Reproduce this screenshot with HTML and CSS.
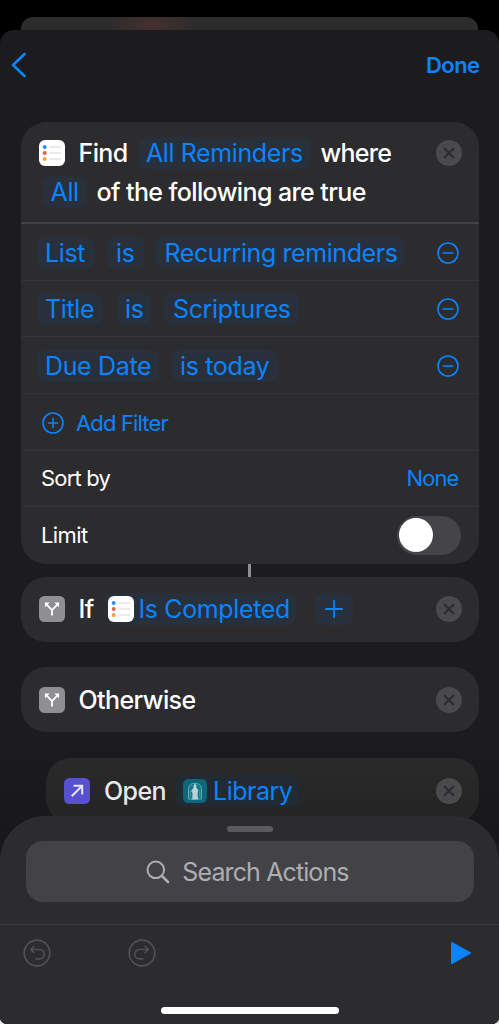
FILE: index.html
```html
<!DOCTYPE html>
<html lang="en">
<head>
<meta charset="utf-8">
<title>Shortcut Editor</title>
<link rel="stylesheet" href="styles.css">
</head>
<body>
<svg class="defs" width="0" height="0" aria-hidden="true">
  <symbol id="close" viewBox="0 0 26 26"><circle cx="13" cy="13" r="13" fill="#4a4a4c"/><path d="M8.700 8.700l8.600 8.600M17.300 8.700l-8.600 8.600" stroke="#2c2c2e" stroke-width="2.100" stroke-linecap="round"/></symbol>
  <symbol id="minus" viewBox="0 0 24 24"><circle cx="12" cy="12" r="10" fill="none" stroke="#0a84ff" stroke-width="1.600"/><path d="M7.300 12h9.400" stroke="#0a84ff" stroke-width="1.600" stroke-linecap="round"/></symbol>
  <symbol id="reminders" viewBox="0 0 26 26"><rect width="26" height="26" rx="6" fill="#fff"/><path d="M10.500 7h11.500M10.500 13h11.500M10.500 19h11.500" stroke="#d6d7da" stroke-width="1"/><circle cx="5.700" cy="7" r="2" fill="#2d8df0"/><circle cx="5.700" cy="13" r="2" fill="#ee5b50"/><circle cx="5.700" cy="19" r="2" fill="#f6a338"/></symbol>
  <symbol id="branch" viewBox="0 0 26 26"><rect width="26" height="26" rx="5.500" fill="#8e8e93"/><path d="M13 19.500v-5.300L7.700 8.600M13 14.200l5.300-5.600" fill="none" stroke="#fff" stroke-width="1.800" stroke-linejoin="round"/><path d="M5.900 6.500h4.800l-4.800 4.700zM20.100 6.500h-4.800l4.800 4.700z" fill="#fff"/></symbol>
</svg>
<main class="phone">
  <div class="behind"></div>
  <section class="sheet">
    <header class="nav">
      <svg width="16" height="26" viewBox="0 0 16 26"><path d="M13.500 2L2 13l11.500 11" fill="none" stroke="#0a84ff" stroke-width="2.700" stroke-linecap="round" stroke-linejoin="round"/></svg>
      <span class="done">Done</span>
    </header>
    <div class="flow">
      <article class="card">
        <div class="find">
          <div class="line">
            <svg class="app"><use href="#reminders"/></svg>
            <span class="word find-word">Find</span>
            <span class="pill all-reminders">All Reminders</span>
            <span class="word where">where</span>
            <svg class="close"><use href="#close"/></svg>
          </div>
          <div class="line second">
            <span class="pill all">All</span>
            <span class="word following">of the following are true</span>
          </div>
        </div>
        <div class="row">
          <span class="pill list">List</span><span class="pill is">is</span><span class="pill recurring">Recurring reminders</span>
          <svg class="minus"><use href="#minus"/></svg>
        </div>
        <div class="row">
          <span class="pill title">Title</span><span class="pill is is-title">is</span><span class="pill scriptures">Scriptures</span>
          <svg class="minus"><use href="#minus"/></svg>
        </div>
        <div class="row">
          <span class="pill due">Due Date</span><span class="pill today">is today</span>
          <svg class="minus"><use href="#minus"/></svg>
        </div>
        <div class="row add">
          <svg width="24" height="24" viewBox="0 0 24 24"><circle cx="12" cy="12" r="10" fill="none" stroke="#0a84ff" stroke-width="1.600"/><path d="M7.400 12h9.200M12 7.400v9.200" stroke="#0a84ff" stroke-width="1.600" stroke-linecap="round"/></svg>
          <span class="add-filter">Add Filter</span>
        </div>
        <div class="row option"><span class="sort">Sort by</span><span class="none">None</span></div>
        <div class="row option"><span class="limit">Limit</span><span class="switch"><span class="knob"></span></span></div>
      </article>
      <div class="connector"></div>
      <article class="card step">
        <svg class="app"><use href="#branch"/></svg>
        <span class="word if">If</span>
        <span class="pill completed"><svg class="app"><use href="#reminders"/></svg><span>Is Completed</span></span>
        <span class="pill plus"><svg width="18" height="18" viewBox="0 0 18 18"><path d="M9 .8v16.400M.8 9h16.400" stroke="#0a84ff" stroke-width="1.800" stroke-linecap="round"/></svg></span>
        <svg class="close"><use href="#close"/></svg>
      </article>
      <article class="card step">
        <svg class="app"><use href="#branch"/></svg>
        <span class="word otherwise">Otherwise</span>
        <svg class="close"><use href="#close"/></svg>
      </article>
      <article class="card step nested">
        <svg class="app" viewBox="0 0 26 26"><rect width="26" height="26" rx="5.500" fill="#5750cf"/><path d="M7.700 18.300L18 8M9.500 7.800h8.700v8.700" fill="none" stroke="#e6e4f5" stroke-width="2"/></svg>
        <span class="word open">Open</span>
        <span class="pill library">
          <svg width="24" height="24" viewBox="0 0 24 24"><rect width="24" height="24" rx="5.500" fill="#0d6679"/><path d="M5.500 20V9.500C5.500 2.500 18.500 2.500 18.500 9.500V20z" fill="#14788a" stroke="#6ba6b0" stroke-width="1"/><path d="M12 4.500l1.500 2-.3 2 2 2.500-.7 4.500.6 5H9.200l.4-6-1.300-2.500 2.300-3.500-.1-2z" fill="#b7d3d7"/><path d="M7.500 18v-7M16.800 18v-7" stroke="#4790a0"/></svg>
          <span>Library</span>
        </span>
        <svg class="close"><use href="#close"/></svg>
      </article>
    </div>
  </section>
  <footer class="drawer">
    <div class="grabber"></div>
    <div class="search">
      <svg width="24" height="24" viewBox="0 0 24 24"><circle cx="9.800" cy="9.800" r="8.300" fill="none" stroke="#aeaeb2" stroke-width="2"/><path d="M16 16l6 6" stroke="#aeaeb2" stroke-width="2.600" stroke-linecap="round"/></svg>
      <span>Search Actions</span>
    </div>
    <div class="tools">
      <svg width="28" height="28" viewBox="0 0 28 28" fill="none" stroke="#505052" stroke-width="1.700" stroke-linecap="round" stroke-linejoin="round"><circle cx="14" cy="14" r="12.800"/><path d="M10.800 7.500l-3 3 3 3M8 10.500h8.500a4.700 4.700 0 0 1 0 9.400h-3.300"/></svg>
      <svg class="redo" width="28" height="28" viewBox="0 0 28 28" fill="none" stroke="#505052" stroke-width="1.700" stroke-linecap="round" stroke-linejoin="round"><circle cx="14" cy="14" r="12.800"/><path d="M17.200 7.500l3 3-3 3M20 10.500h-8.500a4.700 4.700 0 0 0 0 9.400h3.300"/></svg>
      <svg class="play" width="22" height="24" viewBox="0 0 22 24"><path d="M2 2l18 10L2 22z" fill="#0a84ff" stroke="#0a84ff" stroke-width="2" stroke-linejoin="round"/></svg>
    </div>
    <div class="home"></div>
  </footer>
</main>
</body>
</html>
```
FILE: styles.css
```css
* { box-sizing: border-box; }
body { margin: 0; background: linear-gradient(#000 0 900px, #e8e8e8 900px); }
svg { display: block; flex: none; }
.defs { position: absolute; }
.phone {
  position: relative;
  width: 499px;
  height: 1024px;
  padding-top: 17px;
  overflow: hidden;
  border-radius: 0 0 7px 7px;
  background: #000;
  color: #fff;
  font-family: Inter, "Liberation Sans", sans-serif;
  font-size: 25px;
  white-space: nowrap;
}
.behind {
  height: 13px;
  margin: 0 21px;
  border-radius: 12px 12px 0 0;
  background: radial-gradient(ellipse 48px 16px at 131px 8px, #482f2f, transparent), #2c2c2d;
}
.sheet { height: 994px; border-radius: 14px 14px 0 0; background: linear-gradient(#1c1c1e 0 700px, #18181a 800px); }
.nav { display: flex; align-items: center; justify-content: space-between; height: 70px; padding: 0 20px 0 11px; color: #0a84ff; }
.done { width: 53px; font-size: 22px; font-weight: 600; letter-spacing: -.55px; }
.flow { padding: 21.500px 20.500px 0; }
.card { border-radius: 25px; background: #2c2c2e; overflow: hidden; }
.find { height: 102.700px; padding: 13px 17px 0 18px; border-bottom: 2px solid #434346; }
.line { display: flex; align-items: center; height: 36px; }
.second { height: 42px; padding-left: 4px; }
.app { width: 26px; height: 26px; }
.close { width: 26px; height: 26px; margin-left: auto; }
.word { font-weight: 500; letter-spacing: -.6px; }
.find-word { width: 60px; margin-left: 14px; }
.pill { flex: none; height: 32px; padding-left: 8px; border-radius: 8px; background: #28303b; color: #0a84ff; line-height: 32px; letter-spacing: -.35px; }
.all-reminders { width: 171px; padding-left: 7.500px; letter-spacing: -.4px; }
.where { margin-left: 11px; letter-spacing: -.75px; }
.all { width: 43px; }
.following { margin-left: 11px; }
.row { display: flex; align-items: center; height: 56.600px; padding: 1.800px 18.500px 0 16.500px; border-bottom: 1px solid #343436; }
.row:last-child { border-bottom: 0; padding-top: 0; }
.minus { width: 24px; height: 24px; margin-left: auto; }
.list { width: 57px; }
.is { width: 37px; margin-left: 13px; padding-left: 9px; }
.recurring { width: 248px; margin-left: 12px; padding-left: 8.500px; letter-spacing: -.42px; }
.title { width: 65px; }
.is-title { width: 34px; margin-left: 15px; padding-left: 8px; }
.scriptures { width: 135px; margin-left: 13px; padding-left: 9px; }
.due { width: 122px; }
.today { width: 106px; margin-left: 13px; }
.add { padding-left: 20.500px; color: #0a84ff; font-size: 22px; letter-spacing: -.85px; }
.add-filter { margin-left: 11px; }
.option { justify-content: space-between; padding-left: 20.500px; padding-right: 20px; font-size: 22px; letter-spacing: -.8px; }
.option:not(:last-child) { padding-top: 0; }
.none { color: #0a84ff; letter-spacing: -.9px; }
.limit { letter-spacing: -.6px; }
.switch { width: 64px; height: 39px; margin-right: -2.500px; padding: 2.500px 1.500px; border-radius: 20px; background: #454549; }
.knob { display: block; width: 34px; height: 34px; border-radius: 50%; background: #fff; }
.connector { width: 2.500px; height: 13px; margin: 0 auto; background: #8e8e93; }
.step { display: flex; align-items: center; height: 65px; padding: 0 17px 0 18px; }
.step + .step { margin-top: 25.700px; }
.if { width: 27px; margin-left: 14px; }
.completed { display: flex; align-items: center; width: 190px; padding-left: 2px; }
.completed span { margin-left: 5px; letter-spacing: -.37px; }
.plus { display: grid; place-items: center; width: 38px; margin-left: 19px; padding: 0; }
.otherwise { margin-left: 14px; }
.nested { margin-left: 25.500px; background: linear-gradient(#2a2a2b, #242425); }
.open { width: 72px; margin-left: 14px; color: #e8e8ea; }
.library { display: flex; align-items: center; width: 123px; padding-left: 7px; background: #222b34; }
.library span { margin-left: 6px; letter-spacing: -.5px; }
.drawer {
  position: absolute;
  inset: 816px 0 0;
  padding-top: 10px;
  border-radius: 45px 45px 0 0;
  background: #2c2c2e;
}
.grabber { width: 46px; height: 6px; margin: 0 auto; border-radius: 3px; background: #5a5a5d; }
.search { display: flex; align-items: center; justify-content: center; gap: 12px; height: 61px; margin: 9px 25px 0 26px; padding-right: 5px; border-radius: 17px; background: #434347; color: #aeaeb2; letter-spacing: -.88px; }
.tools { display: flex; align-items: center; height: 57px; margin-top: 22px; padding: 0 27px 0 22.500px; border-top: 1px solid #3a3a3b; }
.redo { margin-left: 77px; }
.play { margin-left: auto; }
.home { width: 178px; height: 7px; margin: 26px auto 0; border-radius: 4px; background: #fff; }
```
